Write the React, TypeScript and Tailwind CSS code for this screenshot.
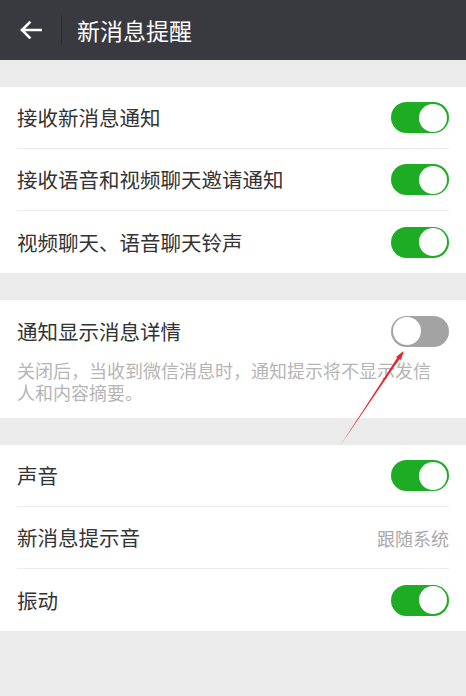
import React, { useState } from 'react';

const font = { fontFamily: '"Noto Sans CJK SC", "Noto Sans", sans-serif' };

function Toggle({ on, onChange }: { on: boolean; onChange: () => void }) {
  return (
    <button
      onClick={onChange}
      className={`relative w-[58px] h-[31px] rounded-full shrink-0 ${on ? 'bg-[#1eac24]' : 'bg-[#a3a3a3]'}`}
    >
      <span
        className={`absolute top-[1.5px] w-[28px] h-[28px] rounded-full bg-white ${on ? 'right-[2px]' : 'left-[2px]'}`}
      />
    </button>
  );
}

function Row({ label, children, last }: { label: string; children: React.ReactNode; last?: boolean }) {
  return (
    <div className={`h-[62px] mx-[17px] flex items-center justify-between ${last ? '' : 'border-b border-[#ececec]'}`}>
      <span className="text-[20.5px] text-[#333333] leading-none">{label}</span>
      {children}
    </div>
  );
}

export default function App() {
  const [s, setS] = useState({
    newMsg: true,
    voip: true,
    ring: true,
    detail: false,
    sound: true,
    vibrate: true,
  });
  const flip = (k: keyof typeof s) => setS(prev => ({ ...prev, [k]: !prev[k] }));

  return (
    <div className="relative w-[466px] h-[696px] bg-[#ebebeb] overflow-hidden" style={font}>
      {/* header */}
      <div className="h-[60px] bg-[#393a3f] flex items-center">
        <button className="w-[61px] h-full flex items-center pl-[20px]">
          <svg width="22" height="18" viewBox="0 0 22 18" fill="none" stroke="white" strokeWidth="2.6" strokeLinecap="square">
            <path d="M2 9h19M9.5 1.5L2 9l7.5 7.5" />
          </svg>
        </button>
        <div className="w-px h-[30px] bg-[#2c2d31]" />
        <h1 className="ml-[15px] text-[23px] text-white leading-none">新消息提醒</h1>
      </div>

      <div className="h-[27px]" />
      <div className="bg-white">
        <Row label="接收新消息通知"><Toggle on={s.newMsg} onChange={() => flip('newMsg')} /></Row>
        <Row label="接收语音和视频聊天邀请通知"><Toggle on={s.voip} onChange={() => flip('voip')} /></Row>
        <Row label="视频聊天、语音聊天铃声" last><Toggle on={s.ring} onChange={() => flip('ring')} /></Row>
      </div>

      <div className="h-[27px]" />
      <div className="bg-white pb-[15px]">
        <Row label="通知显示消息详情" last><Toggle on={s.detail} onChange={() => flip('detail')} /></Row>
        <p className="ml-[17px] w-[422px] -mt-[3px] text-[18px] leading-[22px] text-[#b5b5b5]">
          关闭后，当收到微信消息时，通知提示将不显示发信人和内容摘要。
        </p>
      </div>

      <div className="h-[27px]" />
      <div className="bg-white">
        <Row label="声音"><Toggle on={s.sound} onChange={() => flip('sound')} /></Row>
        <Row label="新消息提示音">
          <span className="text-[18px] text-[#a9a9a9] leading-none">跟随系统</span>
        </Row>
        <Row label="振动" last><Toggle on={s.vibrate} onChange={() => flip('vibrate')} /></Row>
      </div>

      {/* red annotation arrow */}
      <svg className="absolute left-0 top-0 pointer-events-none" width="466" height="696">
        <path d="M340 446 L396 364 L402 356 L404 352 L397 358 Z" fill="#e8262a" />
        <path d="M403.5 351 L396 357 L401 360 Z" fill="#e8262a" />
      </svg>
    </div>
  );
}
